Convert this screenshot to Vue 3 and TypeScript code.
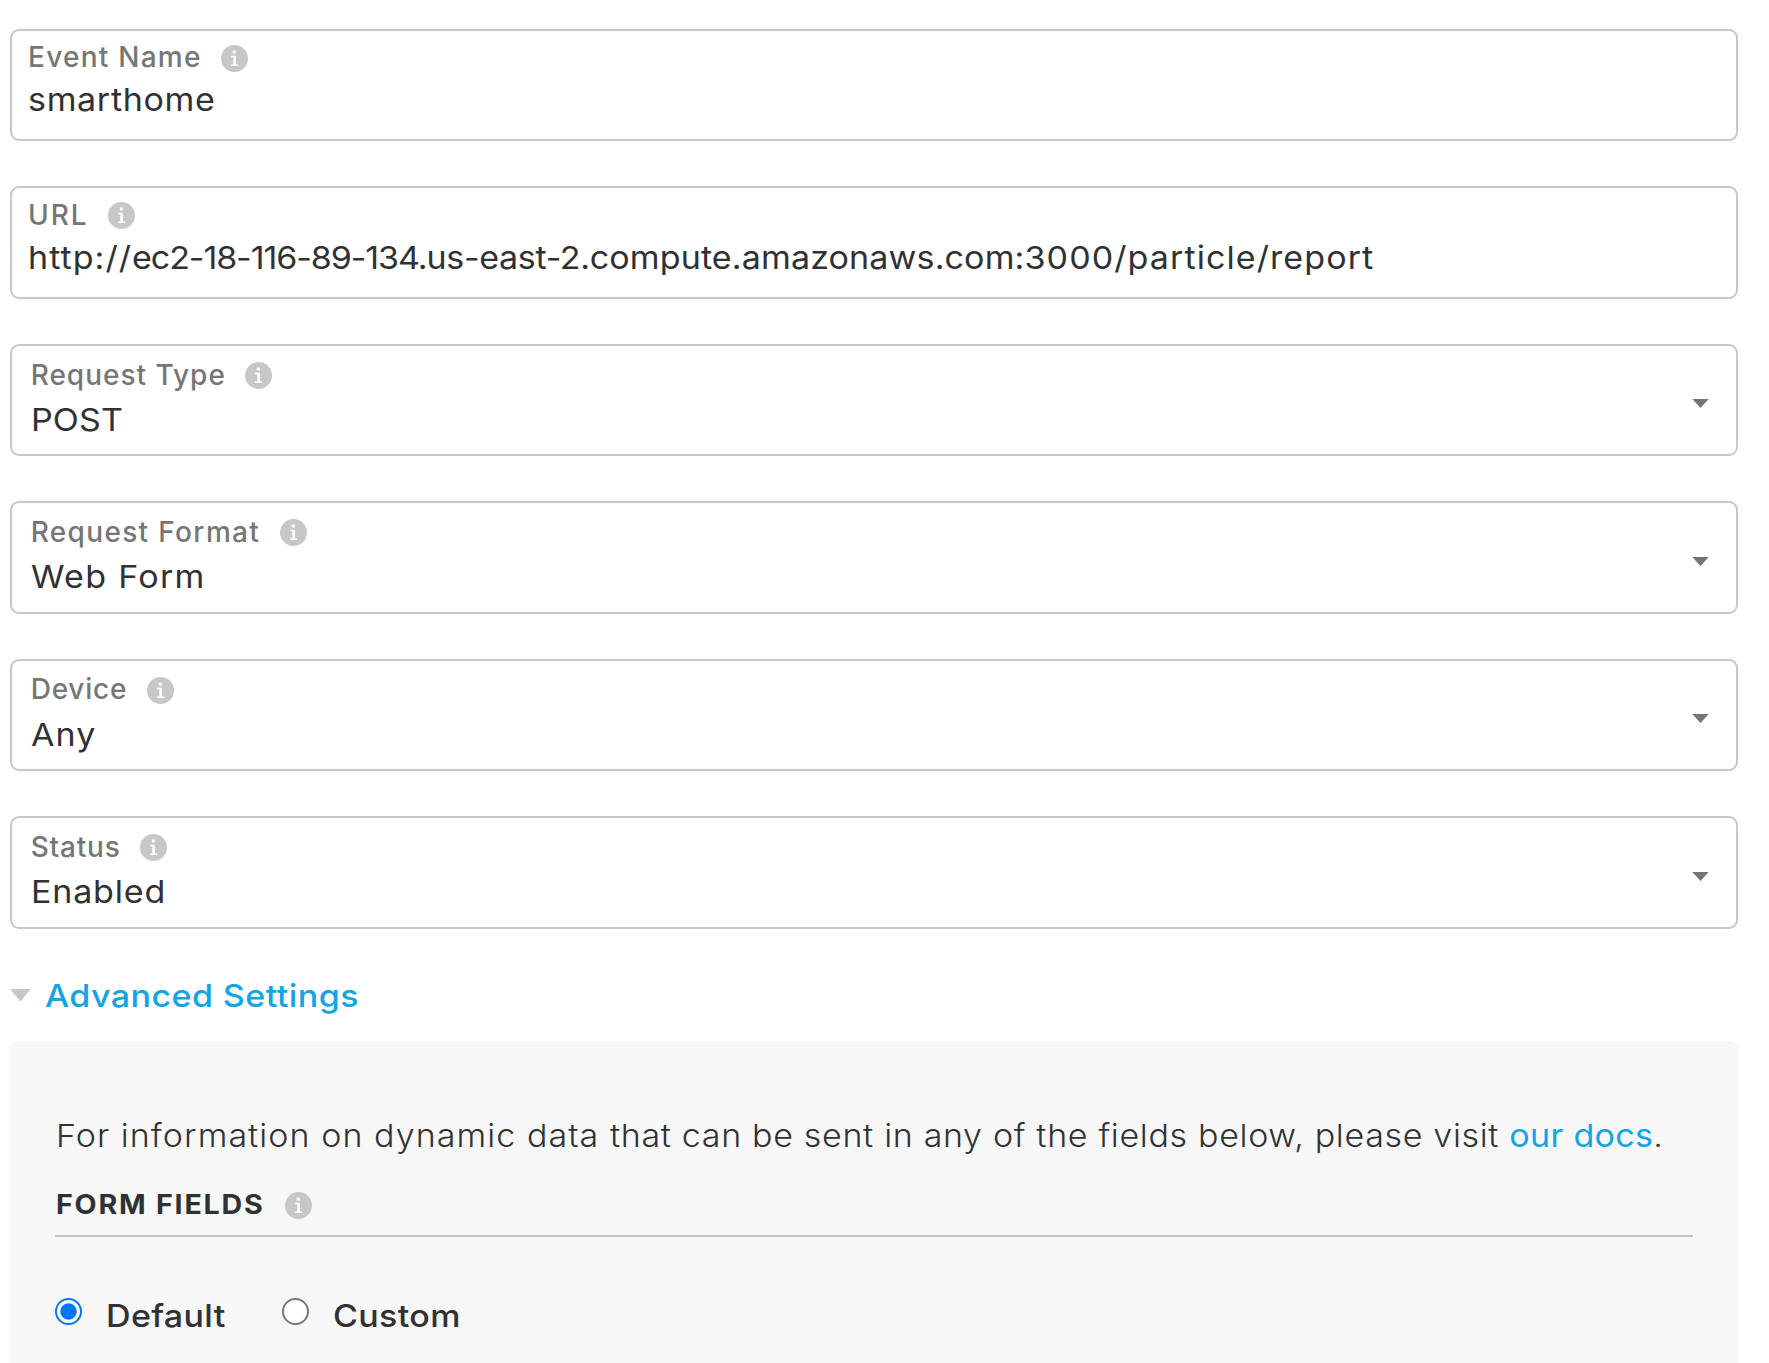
<script setup lang="ts">
import { ref, h } from 'vue'

interface Run {
  text: string
  spacing: number
}

interface Field {
  label: string
  labelSpacing: number
  kind: 'input' | 'select'
  value: Run[]
}

const fields: Field[] = [
  { label: 'Event Name', labelSpacing: 1.258, kind: 'input', value: [{ text: 'smarthome', spacing: 0.62 }] },
  {
    label: 'URL',
    labelSpacing: 2,
    kind: 'input',
    value: [
      { text: 'http://', spacing: 0.97 },
      { text: 'ec2-18-116-89-134.', spacing: -1 },
      { text: 'us-east-2.', spacing: -0.3 },
      { text: 'compute.amazonaws.com:', spacing: 0.12 },
      { text: '3000/particle/report', spacing: 1 },
    ],
  },
  { label: 'Request Type', labelSpacing: 0.99, kind: 'select', value: [{ text: 'POST', spacing: 0.1 }] },
  { label: 'Request Format', labelSpacing: 1.34, kind: 'select', value: [{ text: 'Web Form', spacing: 1.2 }] },
  { label: 'Device', labelSpacing: 0.774, kind: 'select', value: [{ text: 'Any', spacing: 1 }] },
  { label: 'Status', labelSpacing: 0.795, kind: 'select', value: [{ text: 'Enabled', spacing: 0.75 }] },
]

const formMode = ref('default')
const expanded = ref(true)

const InfoIcon = () =>
  h('svg', { width: 27, height: 27, viewBox: '0 0 27 27' }, [
    h('circle', { cx: 13.5, cy: 13.5, r: 13.5, fill: '#c7c7c7' }),
    h('circle', { cx: 13.3, cy: 7.1, r: 1.8, fill: '#fff' }),
    h('path', { d: 'M10.2 10.7h4.7v8.9h2.3v1.5H9.9v-1.5h2.4v-7.3h-2.1z', fill: '#fff' }),
  ])
</script>

<template>
  <main class="page">
    <div class="fields">
      <section v-for="f in fields" :key="f.label" class="field" :class="f.kind">
        <div class="body">
          <div class="label-row">
            <span class="label" :style="{ letterSpacing: f.labelSpacing + 'px' }">{{ f.label }}</span>
            <InfoIcon class="info" />
          </div>
          <div class="value wide"><span v-for="r in f.value" :key="r.text" :style="{ letterSpacing: r.spacing + 'px' }">{{ r.text }}</span></div>
        </div>
        <svg v-if="f.kind === 'select'" class="caret" width="17" height="9" viewBox="0 0 17 9">
          <path d="M0.3 0h16.4L8.5 9z" fill="#757575" />
        </svg>
      </section>
    </div>

    <div class="advanced" @click="expanded = !expanded">
      <svg width="21" height="13" viewBox="0 0 21 13"><path d="M0 0h20.7L10.4 12.4z" fill="#c7c7c7" /></svg>
      <span class="wide">Advanced Settings</span>
    </div>

    <section v-if="expanded" class="panel">
      <p class="intro wide"><span class="lead">For information on dynamic data </span>that can be sent in any of the fields below, please visit <a>our docs</a>.</p>
      <div class="heading">
        <h3 class="wide">FORM FIELDS</h3>
        <InfoIcon class="info" />
      </div>
      <div class="choices">
        <label class="choice">
          <input v-model="formMode" type="radio" name="mode" value="default" />
          <span class="wide">Default</span>
        </label>
        <label class="choice">
          <input v-model="formMode" type="radio" name="mode" value="custom" />
          <span class="wide">Custom</span>
        </label>
      </div>
    </section>
  </main>
</template>

<style>
body {
  background: #fff;
}
</style>

<style scoped>
.page {
  box-sizing: border-box;
  width: 1769px;
  height: 1363px;
  padding: 28.95px 31.3px 0 10px;
  overflow: hidden;
  font-family: Inter, "Open Sans", sans-serif;
  color: #303133;
}
/* extended letterforms */
.wide {
  display: block;
  transform: scaleX(1.08);
  transform-origin: left;
}
.fields {
  display: flex;
  flex-direction: column;
  gap: 45.05px;
}
.field {
  box-sizing: border-box;
  height: 112.4px;
  display: flex;
  justify-content: space-between;
  border: 2px solid #c7c7c7;
  border-radius: 9px;
  padding: 9.5px 28px 0 16px;
}
.field.select {
  padding: 11.8px 26.8px 0 18.7px;
}
.label-row {
  display: flex;
  align-items: center;
  height: 34px;
}
.label {
  font-size: 28px;
  line-height: 34px;
  font-weight: 500;
  color: #757677;
}
.info {
  flex: none;
  margin: 1.7px 0 0 19.3px;
}
.value {
  margin-top: 6px;
  font-size: 31.5px;
  line-height: 40px;
  white-space: nowrap;
}
.select .value {
  margin-top: 8.4px;
}
.caret {
  margin-top: 41.6px;
}
.advanced {
  display: flex;
  align-items: flex-start;
  gap: 13.7px;
  margin-top: 47.4px;
  height: 40px;
  font-size: 31.5px;
  line-height: 40px;
  font-weight: 500;
  letter-spacing: 0.4px;
  color: #12a5e5;
}
.advanced svg {
  margin-top: 13px;
}
.panel {
  box-sizing: border-box;
  margin-top: 25px;
  height: 340px;
  padding: 75.5px 45px 0;
  border-radius: 9px;
  background: #f7f7f7;
}
.intro {
  margin: 0 0 0 0.6px;
  font-size: 31.5px;
  line-height: 40px;
  font-weight: 300;
  letter-spacing: 0.61px;
  white-space: nowrap;
}
.intro .lead {
  letter-spacing: 0.97px;
}
.intro a {
  font-weight: 400;
  letter-spacing: 0.28px;
  color: #12a5e5;
}
.heading {
  display: flex;
  align-items: center;
  height: 34px;
  margin-top: 30.6px;
  padding-bottom: 13.9px;
  border-bottom: 2px solid #c7c7c7;
}
.heading h3 {
  margin: 0 0 0 0.6px;
  font-size: 26.5px;
  line-height: 34px;
  font-weight: 700;
  letter-spacing: 1.65px;
}
.heading .info {
  margin: 2px 0 0 36.1px;
}
.choices {
  display: flex;
  gap: 65.4px;
  margin-top: 59.3px;
}
.choice {
  display: flex;
  align-items: flex-start;
  gap: 23.8px;
  font-size: 31.5px;
  line-height: 40px;
  font-weight: 500;
  letter-spacing: 0.3px;
}
.choice input {
  appearance: none;
  box-sizing: border-box;
  width: 27px;
  height: 27px;
  margin: 1.7px 0 0;
  border: 2px solid #767676;
  border-radius: 50%;
  background: #fff;
}
.choice input:checked {
  border-color: #0075ff;
  background: radial-gradient(circle, #0075ff 7.7px, #fff 8.6px);
}
</style>
